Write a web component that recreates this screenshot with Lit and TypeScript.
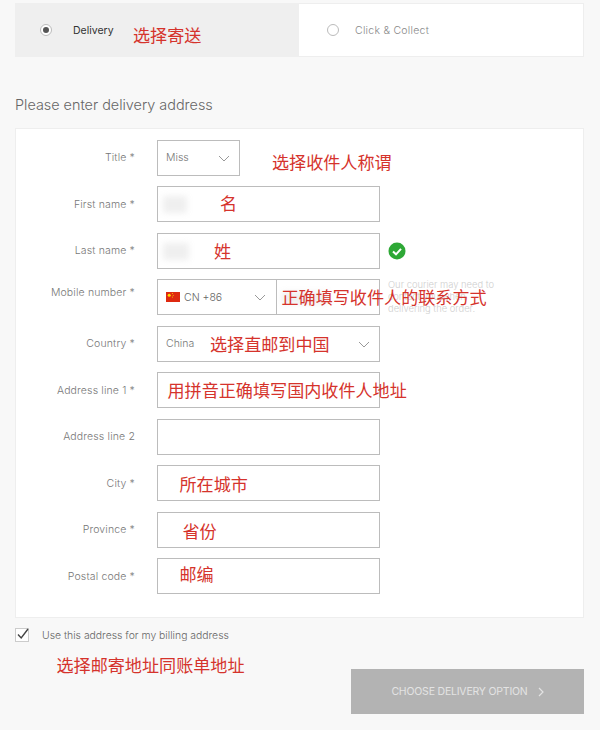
import { LitElement, html, css } from "lit";
import { customElement } from "lit/decorators.js";

const chevron = () => html`<svg class="chev" width="12" height="7" viewBox="0 0 12 7"><path d="M1 1l5 5 5-5" fill="none" stroke="#999" stroke-width="1"/></svg>`;

interface Row { label: string; optional?: boolean; note?: string; noteX?: number; noteY?: number; value?: string; select?: boolean; smudge?: number; check?: boolean; }

const rows: Row[] = [
  { label: "First name", note: "名", noteX: 62, noteY: -1, smudge: 1 },
  { label: "Last name", note: "姓", noteX: 56, noteY: 0, smudge: 2, check: true },
];
const rows2: Row[] = [
  { label: "Country", value: "China", select: true, note: "选择直邮到中国", noteX: 52, noteY: 0 },
  { label: "Address line 1", note: "用拼音正确填写国内收件人地址", noteX: 9.5, noteY: 0 },
  { label: "Address line 2", optional: true },
  { label: "City", note: "所在城市", noteX: 21.5, noteY: 1 },
  { label: "Province", note: "省份", noteX: 24.5, noteY: 1 },
  { label: "Postal code", note: "邮编", noteX: 21.5, noteY: -2 },
];

@customElement("app-root")
export class AppRoot extends LitElement {
  static styles = css`
    :host { display: block; width: 600px; height: 730px; background: #f8f8f8; overflow: hidden; box-sizing: border-box; padding: 3px 16px 0 15px; font-family: "Inter", "Liberation Sans", "Noto Sans CJK SC", sans-serif; font-weight: 300; color: #777; }
    .note { font-family: "Noto Sans CJK SC", sans-serif; font-size: 17.1px; line-height: 24px; color: #d5332c; white-space: nowrap; font-weight: 400; }
    .tabs { display: flex; height: 54px; background: #fff; box-shadow: 0 0 0 1px #eeeeee inset; }
    .tab { flex: 0 0 284px; display: flex; align-items: center; font-size: 10.5px; box-sizing: border-box; }
    .tab.on { background: #efefef; padding-left: 25px; color: #333; font-weight: 400; }
    .tab.off { padding-left: 28px; color: #888; flex: 1; letter-spacing: 0.25px; }
    .radio { width: 12px; height: 12px; border-radius: 50%; border: 1px solid #bbb; box-sizing: border-box; background: #fff; display: flex; align-items: center; justify-content: center; }
    .radio i { width: 6px; height: 6px; border-radius: 50%; background: #555; }
    .on .radio { margin-right: 21px; }
    .off .radio { margin-right: 16px; }
    .on .lbl { width: 60px; }
    .on .note { margin-top: 10px; }
    h2 { margin: 38px 0 0; height: 33px; font-size: 14.4px; font-weight: 300; color: #666; line-height: 20px; }
    .card { height: 490px; box-sizing: border-box; background: #fff; box-shadow: 0 0 0 1px #eeeeee inset; padding: 11.75px 0 0; display: grid; grid-auto-rows: 36px; row-gap: 10.5px; }
    .row { display: grid; grid-template-columns: 120px 223px auto; column-gap: 22px; align-items: center; position: relative; }
    .row > label { text-align: right; font-size: 10.5px; letter-spacing: 0.15px; color: #777; margin-top: 0; white-space: nowrap; }
    .row.top > label { margin-top: -10px; }
    .field { height: 36px; box-sizing: border-box; border: 1px solid #bcbcbc; background: #fff; position: relative; display: flex; align-items: center; padding-left: 8px; font-size: 10.5px; color: #777; }
    .field.short { width: 83px; }
    .field .chev { position: absolute; right: 9px; top: 14px; }
    .field .note { position: absolute; top: 5px; }
    .title-note { position: absolute; left: 257px; top: 10px; }
    .smudge { position: absolute; left: 5px; top: 9px; height: 17px; background: #efefef; filter: blur(3px); }
    .check { margin-left: -14px; display: block; }
    .phone { padding: 0; }
    .cc { width: 119px; height: 100%; border-right: 1px solid #bcbcbc; display: flex; align-items: center; padding-left: 8px; box-sizing: border-box; position: relative; gap: 4px; color: #666; }
    .cc .chev { right: 10px; }
    .flag { display: block; }
    .phone .note { left: 123.5px; }
    .hint { font-size: 9.4px; line-height: 12px; color: #cfcfcf; width: 114px; margin: 0 0 0 -14px; }
    .bill { display: flex; align-items: center; margin-top: 9px; font-size: 10.4px; color: #666; height: 16px; }
    .box { width: 14px; height: 14px; box-sizing: border-box; border: 1px solid #ccc; background: #fff; margin-right: 13px; position: relative; flex: none; }
    .box svg { position: absolute; left: 0; top: -2px; }
    .foot { display: flex; justify-content: space-between; align-items: flex-start; }
    .foot .note { margin: 10px 0 0 41.5px; }
    button { margin: 26px 0 0; width: 233px; height: 45px; border: 0; background: #b3b3b3; color: #e3e3e3; font: inherit; font-size: 10.5px; font-weight: 400; letter-spacing: -0.2px; display: flex; align-items: center; justify-content: center; gap: 10px; padding: 0; }
  `;

  private renderRow(r: Row) {
    return html`<div class="row">
      <label>${r.label}${r.optional ? "" : " *"}</label>
      <div class="field">
        ${r.smudge ? html`<span class="smudge" style="width:${r.smudge === 1 ? 24 : 26}px"></span>` : null}
        ${r.value ?? ""}
        ${r.select ? chevron() : null}
        ${r.note ? html`<span class="note" style="left:${r.noteX}px;top:${5 + (r.noteY ?? 0)}px">${r.note}</span>` : null}
      </div>
      ${r.check
        ? html`<svg class="check" width="18" height="18" viewBox="0 0 18 18"><circle cx="9" cy="9" r="8.5" fill="#2ea836"/><path d="M5 9.5l3 2.8 5-5.5" fill="none" stroke="#fff" stroke-width="2"/></svg>`
        : null}
    </div>`;
  }

  render() {
    return html`
      <div class="tabs">
        <div class="tab on">
          <span class="radio"><i></i></span>
          <span class="lbl">Delivery</span>
          <span class="note">选择寄送</span>
        </div>
        <div class="tab off">
          <span class="radio"></span>
          <span class="lbl">Click &amp; Collect</span>
        </div>
      </div>
      <h2>Please enter delivery address</h2>
      <div class="card">
        <div class="row">
          <label>Title *</label>
          <div class="field short">Miss ${chevron()}</div>
          <span class="note title-note">选择收件人称谓</span>
        </div>
        ${rows.map((r) => this.renderRow(r))}
        <div class="row top">
          <label>Mobile number *</label>
          <div class="field phone">
            <div class="cc">
              <svg class="flag" width="14" height="10" viewBox="0 0 14 10"><rect width="14" height="10" fill="#de2910"/><circle cx="3.2" cy="3.2" r="1.5" fill="#ffde00"/><circle cx="6.4" cy="1.6" r=".5" fill="#ffde00"/><circle cx="7.2" cy="3.2" r=".5" fill="#ffde00"/><circle cx="6.4" cy="5" r=".5" fill="#ffde00"/></svg>
              CN +86 ${chevron()}
            </div>
            <span class="smudge" style="left:124px;top:12px;width:46px;height:12px"></span>
            <span class="note">正确填写收件人的联系方式</span>
          </div>
          <p class="hint">Our courier may need to contact you when delivering the order.</p>
        </div>
        ${rows2.map((r) => this.renderRow(r))}
      </div>
      <div class="bill">
        <span class="box"><svg width="14" height="14" viewBox="0 0 14 14"><path d="M2 7.5l3.2 3.5L12 2" fill="none" stroke="#444" stroke-width="1.4"/></svg></span>
        Use this address for my billing address
      </div>
      <div class="foot">
        <span class="note">选择邮寄地址同账单地址</span>
        <button>CHOOSE DELIVERY OPTION <svg width="6" height="10" viewBox="0 0 6 10"><path d="M1 1l4 4-4 4" fill="none" stroke="#e3e3e3" stroke-width="1.2"/></svg></button>
      </div>
    `;
  }
}
